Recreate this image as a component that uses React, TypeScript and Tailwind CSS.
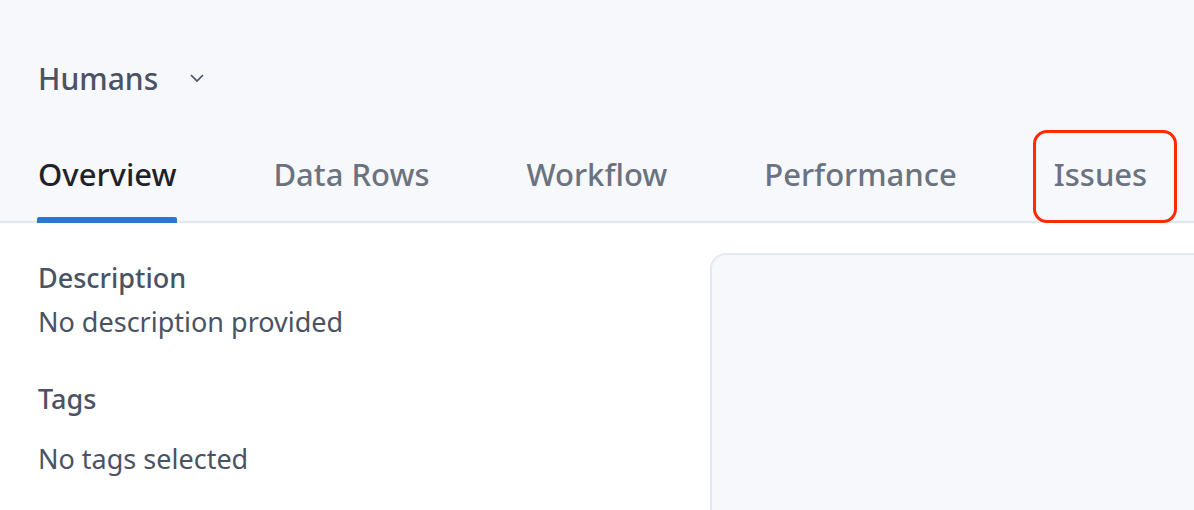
import React from "react";

const tabs = ["Overview", "Data Rows", "Workflow", "Performance", "Issues"];

export default function App() {
  return (
    <div
      className="relative w-[1194px] h-[510px] overflow-hidden bg-white"
      style={{ fontFamily: '"Noto Sans", "Open Sans", sans-serif' }}
    >
      <div className="bg-[#f7f8fb] border-b-2 border-[#e3e7ef] px-[38px]">
        <div className="pt-[58px] flex items-center h-[100px]">
          <span className="text-[30px] leading-[42px] font-medium text-[#4a5363]">Humans</span>
          <svg className="ml-[31px] mt-[-2px]" width="16" height="10" viewBox="0 0 16 10" fill="none">
            <path d="M2 2l6 6 6-6" stroke="#4a5363" strokeWidth="1.7" />
          </svg>
        </div>
        <div className="flex gap-[97px] mt-[53px]">
          {tabs.map((t, i) => (
            <div key={t} className="relative pb-[26px]">
              <span
                className={
                  "text-[31px] leading-[42px] font-medium " +
                  (i === 0 ? "text-[#1f2329]" : "text-[#6b7380]")
                }
              >
                {t}
              </span>
              {i === 0 && (
                <div className="absolute left-[-1px] right-[-1px] bottom-[-2px] h-[6px] bg-[#2b76d3] rounded-t-[2px]" />
              )}
            </div>
          ))}
        </div>
      </div>
      <div className="flex px-[38px] pt-[37px]">
        <div className="w-[672px] flex flex-col">
          <div className="text-[27px] leading-[36px] font-medium text-[#4a5363]">Description</div>
          <div className="text-[27px] leading-[36px] text-[#4a5363] mt-[8px]">No description provided</div>
          <div className="text-[27px] leading-[36px] font-medium text-[#4a5363] mt-[41px]">Tags</div>
          <div className="text-[27px] leading-[36px] text-[#4a5363] mt-[24px]">No tags selected</div>
        </div>
        <div className="flex-1 mt-[-7px] h-[400px] mr-[-100px] rounded-[16px] border-2 border-[#e3e7ef] bg-[#f7f8fb]" />
      </div>
      <div className="absolute left-[1033px] top-[130px] w-[144px] h-[93px] rounded-[14px] border-[3px] border-[#fe2a00]" />
    </div>
  );
}
